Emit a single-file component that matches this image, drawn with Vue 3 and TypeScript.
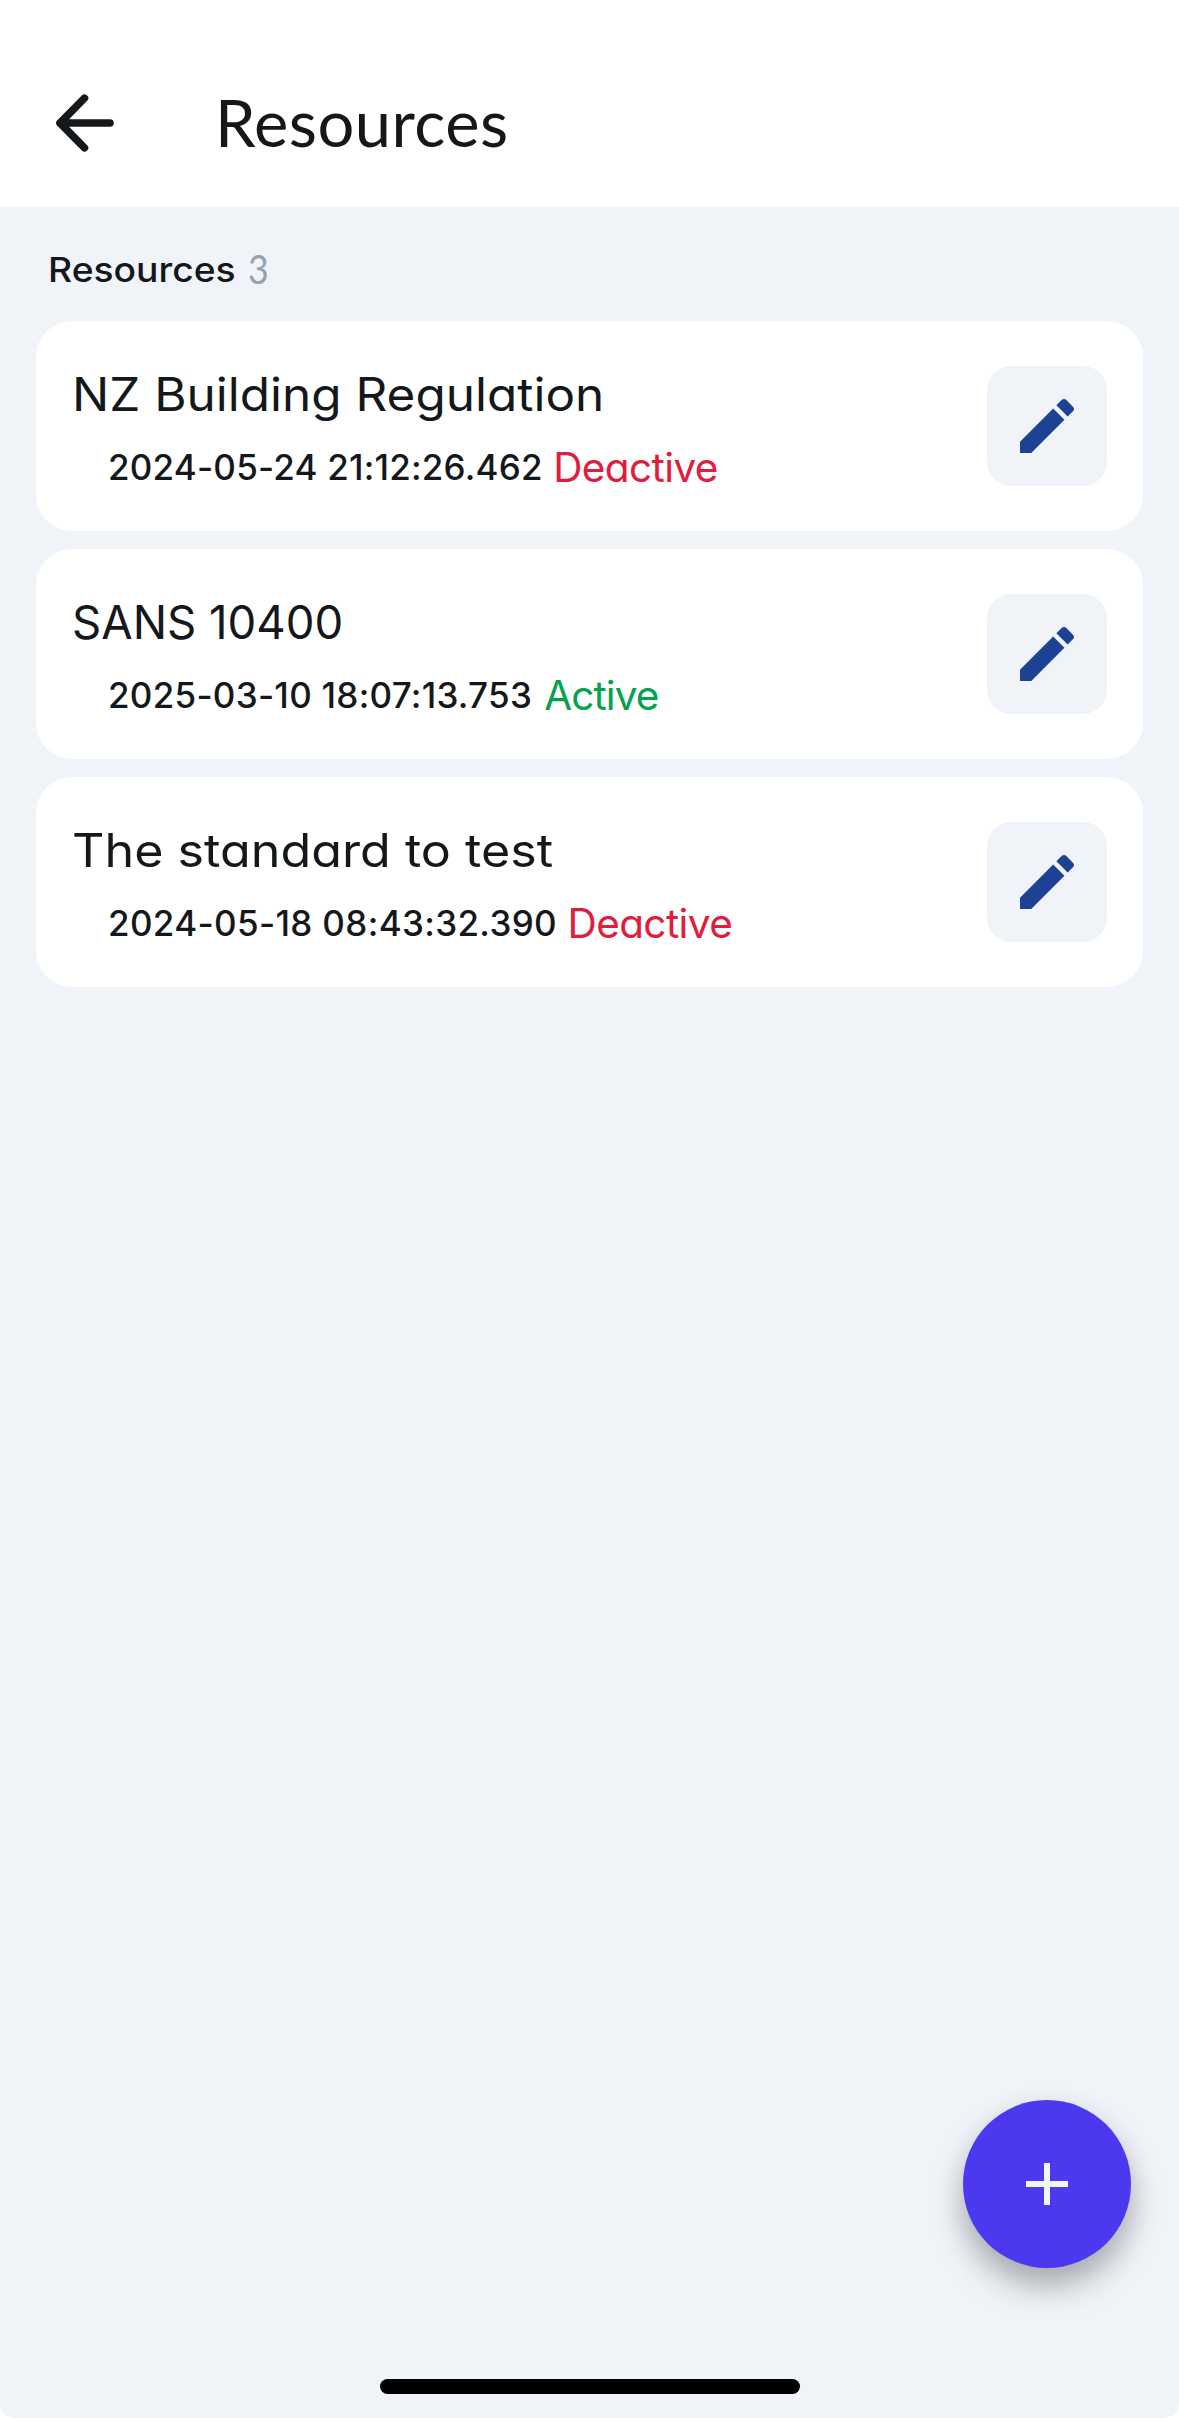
<script setup lang="ts">
interface Resource {
  name: string
  nameStretch: number
  date: string
  dateTracking: number
  active: boolean
}

const resources: Resource[] = [
  { name: 'NZ Building Regulation', nameStretch: 1.075, date: '2024-05-24 21:12:26.462', dateTracking: 0.2, active: false },
  { name: 'SANS 10400', nameStretch: 0.99, date: '2025-03-10 18:07:13.753', dateTracking: 0.26, active: true },
  { name: 'The standard to test', nameStretch: 1.092, date: '2024-05-18 08:43:32.390', dateTracking: 0.34, active: false },
]
</script>

<template>
  <div class="screen">
    <header class="header">
      <button class="back" aria-label="Back">
        <svg width="60" height="60" viewBox="0 0 60 60" fill="none" stroke="#14181b" stroke-width="7.6" stroke-linecap="round" stroke-linejoin="round">
          <path d="M56 31H6M30.5 6.2L6 31L30.5 55.8" />
        </svg>
      </button>
      <h1 class="heading">Resources</h1>
    </header>

    <main class="body">
      <div class="summary">
        <span class="label">Resources</span>
        <span class="count">{{ resources.length }}</span>
      </div>

      <div class="list">
        <article v-for="item in resources" :key="item.date" class="card">
          <div class="info">
            <div class="name" :style="{ transform: `scaleX(${item.nameStretch})` }">{{ item.name }}</div>
            <div class="meta">
              <span class="date" :style="{ letterSpacing: item.dateTracking + 'px' }">{{ item.date }}</span>
              <span class="status" :class="{ active: item.active }">{{ item.active ? 'Active' : 'Deactive' }}</span>
            </div>
          </div>
          <button class="edit" aria-label="Edit">
            <svg width="72" height="72" viewBox="0 0 24 24" fill="#1d4294">
              <path d="M20.71 7.04C21.1 6.65 21.1 6 20.71 5.63L18.37 3.29C18 2.9 17.35 2.9 16.96 3.29L15.12 5.12L18.87 8.87M3 17.25V21H6.75L17.81 9.93L14.06 6.18L3 17.25Z" />
            </svg>
          </button>
        </article>
      </div>

      <button class="fab" aria-label="Add">
        <svg width="72" height="72" viewBox="0 0 24 24" fill="#f1f4f8">
          <path d="M19 13H13V19H11V13H5V11H11V5H13V11H19Z" />
        </svg>
      </button>
      <div class="home-bar"></div>
    </main>
  </div>
</template>

<style>
body {
  margin: 0;
  background: #fff;
}
</style>

<style scoped>
.screen {
  display: flex;
  flex-direction: column;
  height: 2418px;
  color: #14181b;
  font-family: Inter, "Noto Sans", sans-serif;
  font-variant-ligatures: none;
  white-space: nowrap;
}

button {
  display: flex;
  align-items: center;
  justify-content: center;
  padding: 0;
  border: 0;
  background: none;
}

.header {
  display: flex;
  align-items: center;
  box-sizing: border-box;
  height: 207px;
  padding: 72px 54px 35px;
}

.back {
  width: 60px;
  margin-right: 101px;
}

.heading {
  margin: 0;
  font: 400 65px/70px Lato, sans-serif;
  letter-spacing: 0.47px;
}

.body {
  position: relative;
  flex: 1;
  background: #f0f4f9;
  border-radius: 0 0 14px 14px;
}

.summary {
  display: flex;
  align-items: flex-start;
  box-sizing: border-box;
  height: 114px;
  padding: 41px 48px 0;
}

.label {
  width: 190px;
  margin-top: 2px;
  font-size: 34.5px;
  font-weight: 500;
  line-height: 40px;
  transform: scaleX(1.08);
  transform-origin: left;
}

.count {
  margin-left: 10px;
  color: #95a1ac;
  font: 400 41px/42px Lato, sans-serif;
  transform: scaleX(0.87);
  transform-origin: left;
}

.list {
  display: flex;
  flex-direction: column;
  gap: 18px;
  padding: 0 36px;
}

.card {
  display: flex;
  align-items: center;
  justify-content: space-between;
  box-sizing: border-box;
  height: 210px;
  padding: 0 36px;
  border-radius: 36px;
  background: #fff;
}

.info {
  padding-top: 2px;
}

.name {
  font-size: 46px;
  line-height: 56px;
  font-feature-settings: "cv11";
  transform-origin: left;
}

.meta {
  display: flex;
  margin-top: 22px;
  padding-left: 36px;
  height: 44px;
  line-height: 44px;
}

.date {
  margin-top: 1px;
  font-size: 35px;
  font-weight: 500;
}

.status {
  margin: 2px 0 0 10.5px;
  color: #e21c3d;
  font-size: 40.5px;
  letter-spacing: -0.6px;
  font-feature-settings: "cv11";
}

.status.active {
  margin-left: 12px;
  color: #04a24c;
  letter-spacing: -0.9px;
}

.edit {
  width: 120px;
  height: 120px;
  border-radius: 24px;
  background: #f0f4f9;
}

.fab {
  position: absolute;
  right: 48px;
  bottom: 150px;
  width: 168px;
  height: 168px;
  border-radius: 50%;
  background: #4b39ef;
  box-shadow: 0 19px 32px rgba(0, 0, 0, 0.28), 0 6px 30px rgba(0, 0, 0, 0.06);
}

.home-bar {
  position: absolute;
  left: 380px;
  bottom: 24px;
  width: 420px;
  height: 15px;
  border-radius: 8px;
  background: #000;
}
</style>
